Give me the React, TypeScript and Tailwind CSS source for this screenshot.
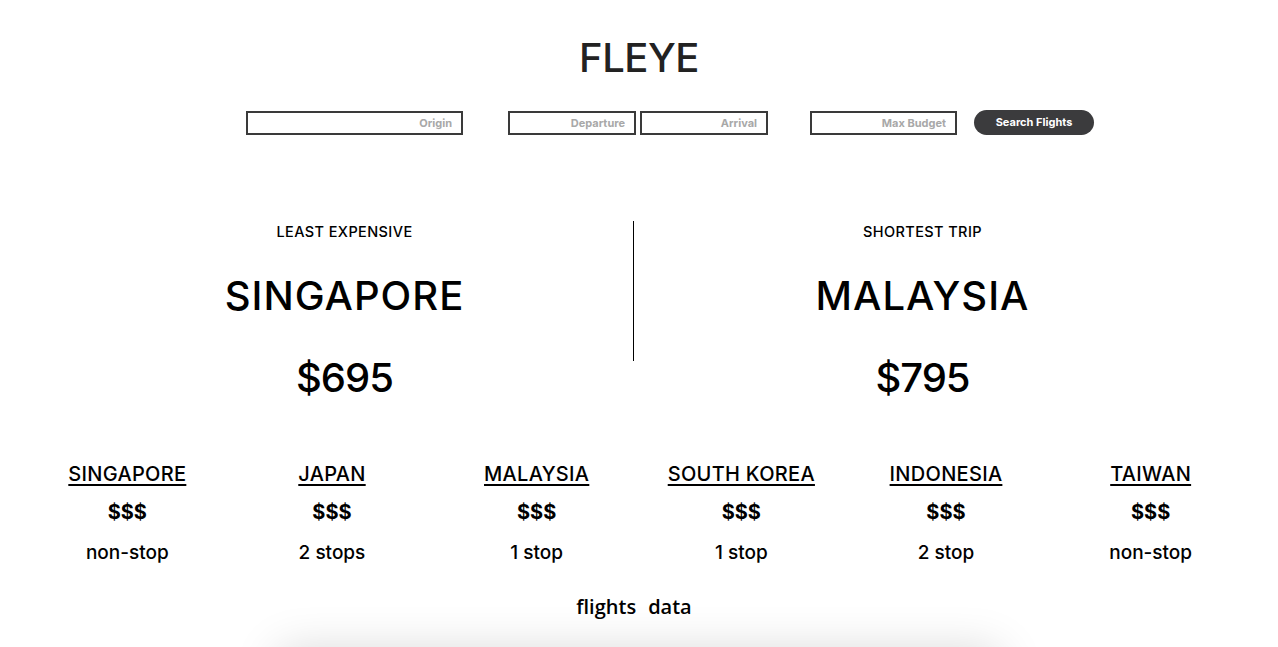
import { ComponentProps } from 'react';

const font = "font-['Inter',sans-serif]";

function SearchInput({ className = '', ...props }: ComponentProps<'input'>) {
  return (
    <input
      className={`h-6 border-2 border-[#3a3a3a] bg-white pr-[9px] pl-1.5 text-right text-[11px] font-bold text-[#333] placeholder:text-[#a8a8a8] outline-none ${className}`}
      {...props}
    />
  );
}

function Highlight({ label, place, price }: { label: string; place: string; price: string }) {
  return (
    <div className="flex w-[577px] flex-col items-center text-black">
      <p className="text-[14.5px] leading-none font-medium tracking-[0.4px]">{label}</p>
      <p className="mt-[36px] text-[40px] leading-none font-medium tracking-[1px]">{place}</p>
      <p className="mt-[42px] text-[40px] leading-none font-medium tracking-[-1px]">{price}</p>
    </div>
  );
}

const flights = [
  { country: 'SINGAPORE', stops: 'non-stop' },
  { country: 'JAPAN', stops: '2 stops' },
  { country: 'MALAYSIA', stops: '1 stop' },
  { country: 'SOUTH KOREA', stops: '1 stop' },
  { country: 'INDONESIA', stops: '2 stop' },
  { country: 'TAIWAN', stops: 'non-stop' },
];

export default function App() {
  return (
    <div className={`h-[647px] overflow-hidden bg-white ${font}`}>
      <header className="pt-[38px] text-center">
        <h1 className="text-[40px] leading-none font-medium tracking-[-0.5px] text-[#222]">FLEYE</h1>
      </header>

      <form className="mt-[32px] flex items-center pl-[246px]" onSubmit={(e) => e.preventDefault()}>
        <SearchInput className="w-[217px]" placeholder="Origin" />
        <SearchInput className="ml-[45px] w-[128px]" placeholder="Departure" />
        <SearchInput className="ml-1 w-[128px]" placeholder="Arrival" />
        <SearchInput className="ml-[42px] w-[147px]" placeholder="Max Budget" />
        <button className="ml-[17px] h-[25px] w-[120px] rounded-full bg-[#3b3b3d] text-[11px] font-bold text-white">
          Search Flights
        </button>
      </form>

      <section className="mt-[90px] ml-[56px] flex">
        <Highlight label="LEAST EXPENSIVE" place="SINGAPORE" price="$695" />
        <div className="-mt-1 h-[140px] w-px bg-black" />
        <Highlight label="SHORTEST TRIP" place="MALAYSIA" price="$795" />
      </section>

      <section className="mt-[66px] grid grid-cols-6 px-[25px] text-center text-black">
        {flights.map((f) => (
          <div key={f.country} className="flex flex-col items-center">
            <a href="#" className="text-[20px] leading-none font-medium tracking-[0.3px] underline underline-offset-[3px]">
              {f.country}
            </a>
            <p className="mt-[18px] text-[20px] leading-none font-bold">$$$</p>
            <p className="mt-[21px] text-[19px] leading-none font-medium">{f.stops}</p>
          </div>
        ))}
      </section>

      <nav className="mt-[35px] flex justify-center gap-3 pr-[10px] font-['Open_Sans',sans-serif] text-[20px] leading-none font-semibold text-black">
        <span>flights</span>
        <span>data</span>
      </nav>

      <div className="mx-auto mt-[34px] h-[200px] w-[720px] bg-white shadow-[0_0_44px_rgba(0,0,0,0.16)]" />
    </div>
  );
}
